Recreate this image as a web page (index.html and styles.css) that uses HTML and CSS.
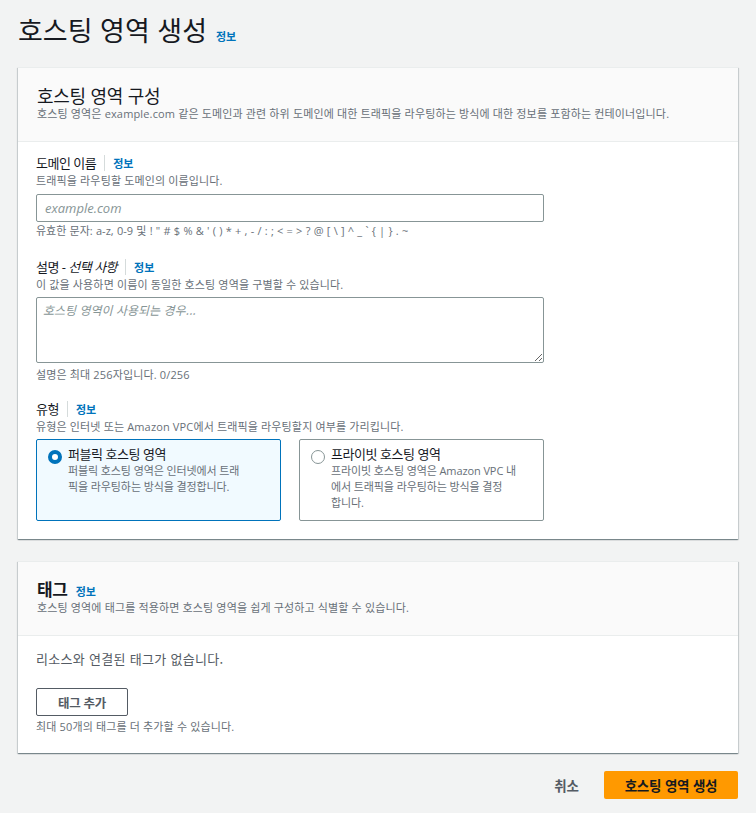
FILE: index.html
```html
<!DOCTYPE html>
<html lang="ko">
<head>
<meta charset="utf-8">
<title>호스팅 영역 생성</title>
<link rel="stylesheet" href="styles.css">
</head>
<body>
<div class="page">
  <div class="page-head">
    <h1 class="page-title">호스팅 영역 생성</h1>
    <a class="info head-info">정보</a>
  </div>

  <section class="card">
    <div class="card-head">
      <h2 class="card-title">호스팅 영역 구성</h2>
      <p class="desc">호스팅 영역은 example.com 같은 도메인과 관련 하위 도메인에 대한 트래픽을 라우팅하는 방식에 대한 정보를 포함하는 컨테이너입니다.</p>
    </div>
    <div class="card-body">
      <div class="field">
        <div class="label-row"><span class="label">도메인 이름</span><a class="info sep">정보</a></div>
        <p class="desc field-desc">트래픽을 라우팅할 도메인의 이름입니다.</p>
        <input class="input" type="text" placeholder="example.com">
        <p class="desc constraint chars">유효한 문자: a-z, 0-9 및 ! " # $ % &amp; ' ( ) * + , - / : ; &lt; = &gt; ? @ [ \ ] ^ _ ` { | } . ~</p>
      </div>

      <div class="field">
        <div class="label-row"><span class="label">설명 - <i>선택 사항</i></span><a class="info sep">정보</a></div>
        <p class="desc field-desc">이 값을 사용하면 이름이 동일한 호스팅 영역을 구별할 수 있습니다.</p>
        <textarea class="textarea" placeholder="호스팅 영역이 사용되는 경우..."></textarea>
        <p class="desc constraint">설명은 최대 256자입니다. 0/256</p>
      </div>

      <div class="field field-type">
        <div class="label-row"><span class="label">유형</span><a class="info sep">정보</a></div>
        <p class="desc field-desc">유형은 인터넷 또는 Amazon VPC에서 트래픽을 라우팅할지 여부를 가리킵니다.</p>
        <div class="tiles">
          <div class="tile selected">
            <span class="radio on"></span>
            <div class="tile-text">
              <div class="tile-title">퍼블릭 호스팅 영역</div>
              <p class="desc tile-desc">퍼블릭 호스팅 영역은 인터넷에서 트래<br>픽을 라우팅하는 방식을 결정합니다.</p>
            </div>
          </div>
          <div class="tile">
            <span class="radio"></span>
            <div class="tile-text">
              <div class="tile-title">프라이빗 호스팅 영역</div>
              <p class="desc tile-desc">프라이빗 호스팅 영역은 Amazon VPC 내<br>에서 트래픽을 라우팅하는 방식을 결정<br>합니다.</p>
            </div>
          </div>
        </div>
      </div>
    </div>
  </section>

  <section class="card card-tags">
    <div class="card-head">
      <div class="title-row"><h2 class="card-title bold">태그</h2><a class="info">정보</a></div>
      <p class="desc">호스팅 영역에 태그를 적용하면 호스팅 영역을 쉽게 구성하고 식별할 수 있습니다.</p>
    </div>
    <div class="card-body tags-body">
      <p class="empty">리소스와 연결된 태그가 없습니다.</p>
      <button class="btn-normal">태그 추가</button>
      <p class="desc constraint">최대 50개의 태그를 더 추가할 수 있습니다.</p>
    </div>
  </section>

  <div class="actions">
    <button class="btn-link">취소</button>
    <button class="btn-primary">호스팅 영역 생성</button>
  </div>
</div>
</body>
</html>
```

FILE: styles.css
```css
* { box-sizing: border-box; }

html, body {
  margin: 0;
  padding: 0;
  background: #f2f3f3;
}

body {
  font-family: "Open Sans", "Noto Sans CJK KR", sans-serif;
  color: #16191f;
  font-size: 13px;
}

p { margin: 0; }

.page {
  padding: 12px 18px 20px 18px;
}

.page-head {
  display: flex;
  align-items: baseline;
  gap: 9px;
}

.page-title {
  margin: 0;
  font-family: "Noto Sans CJK KR", sans-serif;
  font-weight: 400;
  font-size: 27px;
  line-height: 36px;
}

.info {
  color: #0073bb;
  font-family: "Noto Sans CJK KR", sans-serif;
  font-weight: 700;
  font-size: 11px;
  line-height: 16px;
  text-decoration: none;
}

.card {
  margin-top: 19px;
  background: #ffffff;
  border-top: 1px solid #eaeded;
  box-shadow: 0 1px 1px 0 rgba(0, 28, 36, 0.35), 1px 1px 1px 0 rgba(0, 28, 36, 0.12), -1px 1px 1px 0 rgba(0, 28, 36, 0.12);
}

.card-tags { margin-top: 22px; }

.card-head {
  background: #fafafa;
  border-bottom: 1px solid #eaeded;
  padding: 16px 19px 19px 19px;
}

.card-title {
  margin: 0;
  font-family: "Noto Sans CJK KR", sans-serif;
  font-weight: 400;
  font-size: 18px;
  line-height: 22px;
  letter-spacing: -0.3px;
}

.card-title.bold { font-weight: 700; font-size: 17px; }

.title-row {
  display: flex;
  align-items: baseline;
  gap: 8px;
}

.desc {
  font-family: "Open Sans", "Noto Sans CJK KR", sans-serif;
  font-size: 11px;
  line-height: 16px;
  letter-spacing: 0.15px;
  color: #687078;
}

.card-body {
  padding: 12px 18px 18px 18px;
}

.field + .field { margin-top: 19px; }
.field + .field-type { margin-top: 17px; }

.field-desc { margin-top: 1px; }

.label-row {
  display: flex;
  align-items: center;
  height: 18px;
}

.label {
  font-family: "Open Sans", "Noto Sans CJK KR", sans-serif;
  font-size: 13px;
  line-height: 18px;
  letter-spacing: -0.5px;
  color: #16191f;
}

.label i { font-style: italic; }

.sep {
  margin-left: 8px;
  padding-left: 8px;
  border-left: 1px solid #d5dbdb;
  line-height: 16px;
}

.input {
  display: block;
  width: 508px;
  height: 28px;
  margin-top: 5px;
  border: 1px solid #879596;
  border-radius: 2px;
  padding: 0 8px;
  font-family: "Open Sans", sans-serif;
  font-size: 13px;
  background: #fff;
}

.input::placeholder,
.textarea::placeholder {
  color: #879596;
  font-style: italic;
  opacity: 1;
}

.constraint { margin-top: 1px; }

.chars { word-spacing: 0.4px; letter-spacing: 0; }

.textarea {
  display: block;
  width: 508px;
  height: 66px;
  margin-top: 4px;
  border: 1px solid #879596;
  border-radius: 2px;
  padding: 3px 6px;
  font-family: "Noto Sans CJK KR", sans-serif;
  font-size: 12px;
  resize: vertical;
  background: #fff;
}

.textarea + .constraint { margin-top: 4px; }

.tiles {
  display: grid;
  grid-template-columns: 245px 245px;
  gap: 18px;
  margin-top: 4px;
}

.tile {
  display: flex;
  align-items: flex-start;
  gap: 6px;
  height: 82px;
  border: 1px solid #879596;
  border-radius: 2px;
  padding: 5px 10px 8px 11px;
  background: #fff;
}

.tile.selected {
  border-color: #0073bb;
  background: #f1faff;
}

.radio {
  flex: none;
  width: 14px;
  height: 14px;
  margin-top: 5px;
  border-radius: 50%;
  border: 1px solid #879596;
  background: #fff;
}

.radio.on {
  border: 4px solid #0073bb;
  background: #fff;
}

.tile-text { flex: 1; min-width: 0; }

.tile-title {
  font-family: "Noto Sans CJK KR", sans-serif;
  font-size: 13px;
  line-height: 18px;
  letter-spacing: -0.5px;
  color: #16191f;
}

.tile-desc {
  white-space: nowrap;
  letter-spacing: -0.1px;
}

.tags-body {
  padding-top: 14px;
  padding-bottom: 18px;
}

.empty {
  font-family: "Noto Sans CJK KR", sans-serif;
  font-size: 13px;
  line-height: 18px;
  letter-spacing: 0.3px;
  color: #545b64;
}

.btn-normal {
  display: block;
  margin-top: 20px;
  width: 92px;
  height: 28px;
  border: 1px solid #545b64;
  border-radius: 2px;
  background: #fff;
  color: #545b64;
  font-family: "Noto Sans CJK KR", sans-serif;
  font-weight: 700;
  font-size: 12.5px;
  letter-spacing: -0.3px;
  padding: 0;
}

.btn-normal + .constraint { margin-top: 3px; }

.actions {
  display: flex;
  justify-content: flex-end;
  align-items: center;
  gap: 25px;
  margin-top: 18px;
}

.btn-link {
  border: none;
  background: transparent;
  padding: 0;
  color: #545b64;
  font-family: "Noto Sans CJK KR", sans-serif;
  font-weight: 700;
  font-size: 13.5px;
}

.btn-primary {
  width: 134px;
  height: 28px;
  border: none;
  border-radius: 2px;
  background: #ff9900;
  color: #16191f;
  font-family: "Noto Sans CJK KR", sans-serif;
  font-weight: 700;
  font-size: 13.5px;
  letter-spacing: -0.2px;
  padding: 0;
}
```
